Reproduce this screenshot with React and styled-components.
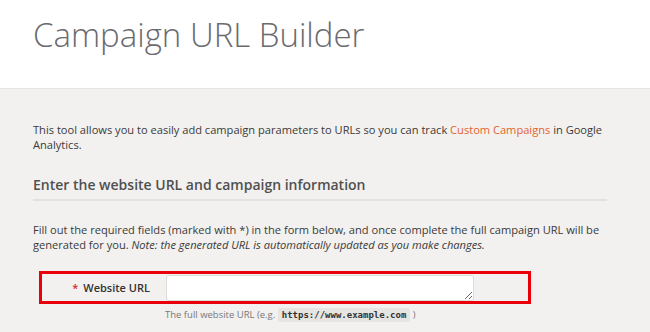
import React from 'react'
import styled, { createGlobalStyle } from 'styled-components'

const GlobalStyle = createGlobalStyle`
    body {
        margin: 0;
        background: #f2f1ef;
        font-family: 'Open Sans', 'Liberation Sans', sans-serif;
        color: #333;
    }
`

const Header = styled.header`
    background: #fff;
    height: 89px;
    border-bottom: 1px solid #e6e5e2;
    padding-left: 33px;
    box-sizing: border-box;
`

const Title = styled.h1`
    margin: 0;
    padding-top: 15px;
    font-size: 33px;
    font-weight: 300;
    line-height: 40px;
    color: #6a6a6f;
`

const Main = styled.main`
    padding: 33px 30px 0 33px;
`

const Text = styled.p`
    margin: 0;
    font-size: 11.1px;
    line-height: 15px;
    color: #3a3a3a;
    max-width: 587px;
    em {
        font-style: italic;
    }
`

const Link = styled.a`
    color: #e5622b;
    text-decoration: none;
`

const SectionTitle = styled.h2`
    margin: 23px 0 21px;
    width: 574px;
    font-size: 14px;
    font-weight: 600;
    line-height: 20px;
    color: #505050;
    padding-bottom: 4px;
    border-bottom: 2px solid #e3e2df;
`

const FieldRow = styled.div`
    margin: 19px 0 0 6px;
    width: 486px;
    height: 27px;
    border: 3px solid #e8000b;
    display: grid;
    grid-template-columns: 108px 308px;
    column-gap: 16px;
    align-items: center;
`

const Label = styled.label`
    text-align: right;
    font-size: 11px;
    font-weight: 600;
    color: #333;
    span {
        color: #d9232e;
        margin-right: 5px;
    }
`

const Input = styled.textarea`
    box-sizing: border-box;
    width: 308px;
    height: 26px;
    margin: 0;
    border: 1px solid #dcdbd8;
    border-radius: 3px;
    background: #fff;
    resize: vertical;
    display: block;
`

const Hint = styled.div`
    margin: 3px 0 0 132px;
    font-size: 9.5px;
    line-height: 16px;
    color: #777;
    code {
        font-family: 'DejaVu Sans Mono', 'Liberation Mono', monospace;
        font-size: 9px;
        font-weight: 600;
        color: #333;
        background: #e6e5e2;
        padding: 2px 4px;
        border-radius: 2px;
    }
`

export default function App() {
    return (
        <>
            <GlobalStyle />
            <Header>
                <Title>Campaign URL Builder</Title>
            </Header>
            <Main>
                <Text>
                    This tool allows you to easily add campaign parameters to URLs so you can track{' '}
                    <Link href="#">Custom Campaigns</Link> in Google Analytics.
                </Text>
                <SectionTitle>Enter the website URL and campaign information</SectionTitle>
                <Text>
                    Fill out the required fields (marked with *) in the form below, and once complete the full
                    campaign URL will be generated for you.{' '}
                    <em>Note: the generated URL is automatically updated as you make changes.</em>
                </Text>
                <FieldRow>
                    <Label>
                        <span>*</span>Website URL
                    </Label>
                    <Input />
                </FieldRow>
                <Hint>
                    The full website URL (e.g. <code>https://www.example.com</code> )
                </Hint>
            </Main>
        </>
    )
}
